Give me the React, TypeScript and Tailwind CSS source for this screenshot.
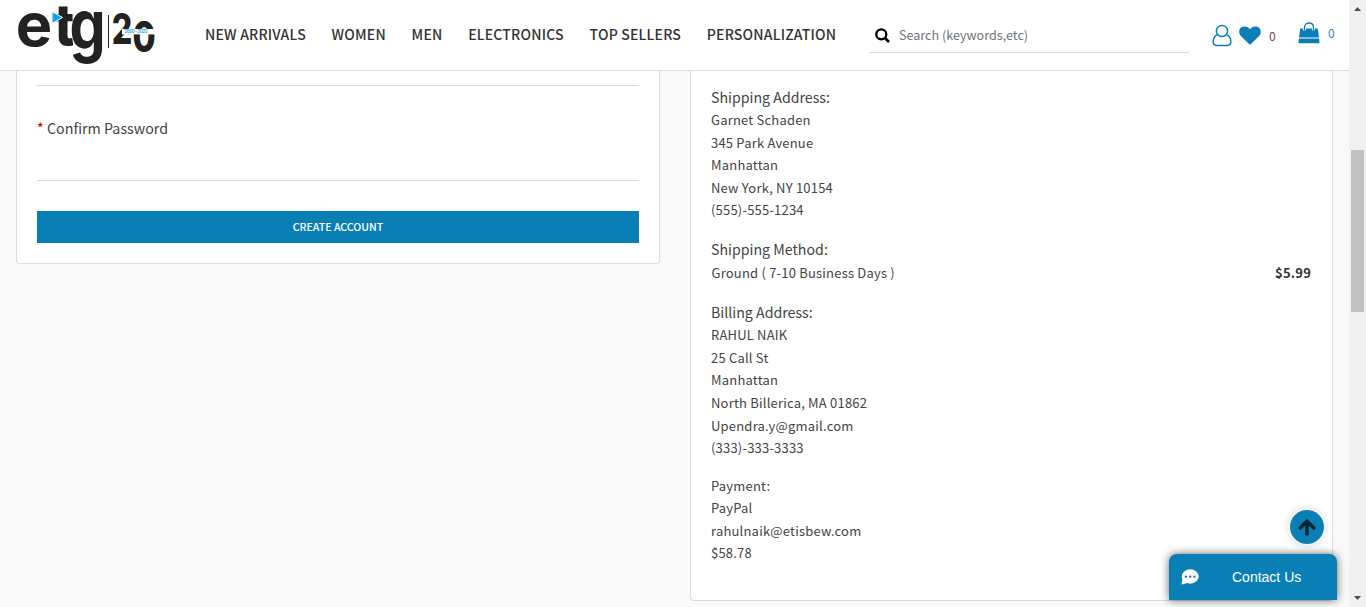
import type { ReactNode } from "react";

const NAV = ["NEW ARRIVALS", "WOMEN", "MEN", "ELECTRONICS", "TOP SELLERS", "PERSONALIZATION"];

function Logo() {
  return (
    <svg width="140" height="66" viewBox="16 3 140 66" fill="#222220" fontFamily="Inter, sans-serif">
      <g fontWeight="700">
        <text transform="translate(15.8 45.6) scale(1.02 1)" fontSize="60">e</text>
        <text transform="translate(54.6 45) scale(0.86 0.96)" fontSize="60" fontWeight="800">t</text>
        <text transform="translate(69.4 48.8) scale(0.97 1.16)" fontSize="59">g</text>
        <text transform="translate(111.7 44) scale(0.75 1)" fontSize="43" fontWeight="800">2</text>
        <text transform="translate(132.4 52) scale(0.78 1)" fontSize="43" fontWeight="800">0</text>
      </g>
      <polygon points="52,11.500 62.500,17.500 52,23.500" fill="#0ea5ee" stroke="#fff" strokeWidth="1" />
      <rect x="108" y="15" width="1" height="33" />
      <rect x="122" y="29" width="33" height="5.400" fill="#fff" />
      <text x="124.500" y="33.400" fontSize="4.500" fontWeight="600" textLength="23" fill="#25a9e8">2000 - 2020</text>
    </svg>
  );
}

function UserIcon() {
  return (
    <svg width="20" height="23" viewBox="0 0 20 23" fill="none" stroke="#0a7fb5" strokeWidth="1.5">
      <circle cx="10" cy="7" r="5.6" />
      <path d="M5.4 10.6C2.6 12 1.2 14.700 1.200 17.600C1.200 20 2.500 21.500 4.700 21.500H15.300C17.500 21.500 18.800 20 18.800 17.600C18.800 14.700 17.400 12 14.600 10.600" />
    </svg>
  );
}

function HeartIcon() {
  return (
    <svg width="22" height="19" viewBox="0 0 22 19" fill="#0a7fb5">
      <path d="M11 18.500C10.700 18.500 10.500 18.400 10.300 18.200L2.400 10.600C1 9.300 0.200 7.700 0.200 5.800C0.200 2.600 2.300 0.500 5.600 0.500C8 0.500 9.800 1.900 11 3.200C12.200 1.900 14 0.500 16.400 0.500C19.700 0.500 21.800 2.600 21.800 5.800C21.800 7.700 21 9.300 19.600 10.600L11.700 18.200C11.500 18.400 11.300 18.500 11 18.500Z" />
    </svg>
  );
}

function BagIcon() {
  return (
    <svg width="22" height="22" viewBox="0 0 22 22">
      <path d="M2.200 6.500H19.800L21 15.400H1Z" fill="#0a7fb5" />
      <path d="M0.900 16.500H21.100L21.500 21.300H0.500Z" fill="#0a7fb5" />
      <path d="M6.500 8.500V5.500C6.500 2.500 8.500 1 11 1S15.500 2.500 15.500 5.500V8.500" fill="none" stroke="#fff" strokeWidth="2.800" />
      <path d="M6.500 8.500V5.500C6.500 2.500 8.500 1 11 1S15.500 2.500 15.500 5.500V8.500" fill="none" stroke="#0a7fb5" strokeWidth="1.300" />
    </svg>
  );
}

function Header() {
  return (
    <header className="flex h-[71px] shrink-0 border-b border-[#e0e0e0] bg-white">
      <div className="ml-4 mt-[3px] w-[189px] shrink-0">
        <Logo />
      </div>
      <nav className="flex w-[664px] shrink-0 gap-[25.7px] pt-[22px] text-[14px] leading-6 font-medium tracking-[0.2px] whitespace-nowrap text-[#333]">
        {NAV.map((item) => (
          <a key={item}>{item}</a>
        ))}
      </nav>
      <div className="flex h-[53px] w-[320px] shrink-0 border-b border-[#dcdcdc] pl-[6px] pt-[18px]">
        <svg className="mt-[10px]" width="15" height="15" viewBox="0 0 15 15" fill="none" stroke="#000" strokeWidth="2.300">
          <circle cx="6.300" cy="6.300" r="5" />
          <path d="M10 10L14 14" strokeWidth="2.600" />
        </svg>
        <span className="ml-[9px] mt-[5px] text-[12.6px] leading-6 text-[#6c757d]">Search (keywords,etc)</span>
      </div>
      <div className="flex pl-[23px]">
        <div className="mt-6"><UserIcon /></div>
        <div className="mt-[26px] ml-[7px]"><HeartIcon /></div>
        <span className="mt-[24px] ml-[8px] w-[7px] text-[12px] leading-6 text-[#744]">0</span>
        <div className="mt-[22px] ml-[22px]"><BagIcon /></div>
        <span className="mt-[21px] ml-[8px] text-[12px] leading-6 text-[#3a83a8]">0</span>
      </div>
    </header>
  );
}

function Heading({ children }: { children: ReactNode }) {
  return <div className="h-[23px] text-[14.2px] leading-[22.5px]">{children}</div>;
}

function Lines({ items }: { items: string[] }) {
  return (
    <>
      {items.map((line) => (
        <div key={line} className="h-[22.6px] text-[13px] leading-[22.6px] tracking-[0.2px]">{line}</div>
      ))}
    </>
  );
}

function Scrollbar() {
  return (
    <div className="flex w-[17px] shrink-0 flex-col items-center bg-[#f1f1f1]">
      <div className="flex h-[150px] flex-col pt-[7px]">
        <svg width="7" height="4" viewBox="0 0 7 4" fill="#505050"><path d="M0 4L3.500 0L7 4Z" /></svg>
      </div>
      <div className="h-[162px] w-[13px] bg-[#c1c1c1]" />
      <div className="flex grow flex-col justify-end pb-[7px]">
        <svg width="7" height="4" viewBox="0 0 7 4" fill="#505050"><path d="M0 0H7L3.500 4Z" /></svg>
      </div>
    </div>
  );
}

export default function App() {
  return (
    <div className="relative flex h-[607px] w-[1366px] overflow-hidden bg-[#f9f9f9] font-['Noto_Sans_CJK_SC',sans-serif] text-[#444]">
      <div className="flex w-[1349px] shrink-0 flex-col">
        <Header />
        <main className="flex items-start gap-[30px] pl-4">
          <section className="h-[193px] w-[644px] rounded-b border border-t-0 border-[#dcdcdc] bg-white px-5">
            <div className="h-[15px] border-b border-[#d9d9d9]" />
            <div className="h-[95px] border-b border-[#d9d9d9] pt-[30px] text-[14.3px] leading-6">
              <span className="text-[#c00]">*</span> Confirm Password
            </div>
            <button className="mt-[30px] block h-8 w-full bg-[#0a7fb5] text-[10.6px] leading-8 font-medium text-white">
              CREATE ACCOUNT
            </button>
          </section>
          <section className="h-[530px] w-[643px] rounded-b border border-t-0 border-[#dcdcdc] bg-white pt-[15px] pr-[21px] pl-5">
            <Heading>Shipping Address:</Heading>
            <Lines items={["Garnet Schaden", "345 Park Avenue", "Manhattan", "New York, NY 10154", "(555)-555-1234"]} />
            <div className="h-[16.5px]" />
            <Heading>Shipping Method:</Heading>
            <div className="flex h-[23px] justify-between pl-[0.5px] text-[13px] leading-[24px] tracking-[0.2px]">
              <span>Ground ( 7-10 Business Days )</span>
              <b className="text-[#333]">$5.99</b>
            </div>
            <div className="h-[16.7px]" />
            <Heading>Billing Address:</Heading>
            <Lines items={["RAHUL NAIK", "25 Call St", "Manhattan", "North Billerica, MA 01862", "Upendra.y@gmail.com", "(333)-333-3333"]} />
            <div className="h-[14.8px]" />
            <Lines items={["Payment:", "PayPal", "rahulnaik@etisbew.com", "$58.78"]} />
          </section>
        </main>
      </div>
      <Scrollbar />
      <div className="absolute top-[510px] left-[1290px] flex size-[34px] items-center justify-center rounded-full bg-[#0a7fb5] shadow-[0_0_0_2px_#f3f3f3,0_0_6px_2px_rgba(0,0,0,0.15)]">
        <svg width="18" height="17" viewBox="0 0 18 17" fill="none" stroke="#062733" strokeWidth="3.600" strokeLinecap="round" strokeLinejoin="round">
          <path d="M9 15V3M2.200 9L9 2.200L15.800 9" />
        </svg>
      </div>
      <div className="absolute top-[554px] left-[1169px] flex h-[46px] w-[168px] items-center rounded-t-lg bg-[#0a7fb5] pl-3 font-['Liberation_Sans',Arial,sans-serif] text-[14px] text-white shadow-[0_0_9px_rgba(0,0,0,0.6)]">
        <svg width="18" height="16" viewBox="0 0 18 16">
          <ellipse cx="9.200" cy="7.500" rx="8.500" ry="7.200" fill="#fff" />
          <path d="M1.500 10L0.400 15.500C2.500 15.500 4 15 6 13.800Z" fill="#fff" />
          <g fill="#0a7fb5"><circle cx="5" cy="7.600" r="1.200" /><circle cx="9.200" cy="7.600" r="1.200" /><circle cx="13.400" cy="7.600" r="1.200" /></g>
        </svg>
        <span className="mt-px ml-[33px]">Contact Us</span>
      </div>
    </div>
  );
}
